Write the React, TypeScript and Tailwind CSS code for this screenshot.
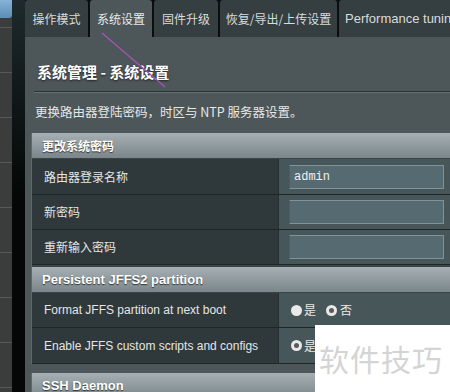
const tabs = [
  { label: '操作模式', w: 'w-[63px]' },
  { label: '系统设置', w: 'w-[62px]', active: true },
  { label: '固件升级', w: 'w-[64px]' },
  { label: '恢复/导出/上传设置', w: 'w-[117px]' },
  { label: 'Performance tuning', w: 'w-[120px]', latin: true },
];

const Header = ({ children, latin }: { children: React.ReactNode; latin?: boolean }) => (
  <div
    className={`h-[26px] flex items-center pl-[10px] bg-gradient-to-b from-[#a6b0b4] to-[#7b868a] border-b border-[#3a4447] text-white font-bold text-[12px] [text-shadow:0_1px_1px_#333] ${
      latin ? "font-['Liberation_Sans',sans-serif] text-[13px]" : "font-['Noto_Sans_CJK_SC',sans-serif]"
    }`}
  >
    {children}
  </div>
);

const Row = ({ label, children, latin, h = 'h-[35px]' }: { label: string; children?: React.ReactNode; latin?: boolean; h?: string }) => (
  <div className={`flex ${h} border-b border-[#1e2628]`}>
    <div
      className={`w-[246px] shrink-0 bg-[#2f383b] flex items-center pl-[12px] text-[12px] text-[#e4e6e6] ${
        latin ? "font-['Liberation_Sans',sans-serif]" : "font-['Noto_Sans_CJK_SC',sans-serif]"
      }`}
    >
      {label}
    </div>
    <div className="flex-1 bg-[#475659] flex items-center pl-[10px] border-l border-[#263033]">{children}</div>
  </div>
);

const Input = ({ value }: { value?: string }) => (
  <div className="w-[155px] h-[24px] bg-[#566b71] border border-[#7f9398] border-l-[#4a5d62] flex items-center pl-[4px] font-['Liberation_Mono',monospace] text-[12px] text-[#eef0f0]">
    {value}
  </div>
);

const Radio = ({ checked }: { checked?: boolean }) => (
  <span className="w-[11px] h-[11px] rounded-full bg-[#e9e9e9] flex items-center justify-center shrink-0">
    {checked && <span className="w-[5px] h-[5px] rounded-full bg-[#5a5a5a]" />}
  </span>
);

const Choice = ({ yes }: { yes?: boolean }) => (
  <div className="flex items-center ml-[2px] font-['Noto_Sans_CJK_SC',sans-serif] text-[12px] text-[#e8eaea]">
    <Radio checked={yes} />
    <span className="ml-[2px] mr-[10px]">是</span>
    <Radio checked={!yes} />
    <span className="ml-[3px]">否</span>
  </div>
);

const App = () => {
  return (
    <div className="relative w-[450px] h-[392px] overflow-hidden flex bg-[#070909] font-['Noto_Sans_CJK_SC',sans-serif]">
      {/* side menu */}
      <div className="w-[12px] shrink-0 flex flex-col bg-[#3b3c3c]">
        <div className="h-[18px] bg-gradient-to-b from-[#86b3d6] to-[#5d8db5] rounded-br-[3px]" />
        <div className="h-[10px] border-b border-[#575859]" />
        {Array.from({ length: 8 }).map((_, i) => (
          <div key={i} className="h-[45px] shrink-0 border-b border-[#575859]" />
        ))}
      </div>
      <div className="w-[13px] shrink-0 bg-gradient-to-b from-[#1e2a2d] via-[#050707] to-[#050707]" />

      {/* main */}
      <div className="flex-1 flex flex-col min-w-0">
        <div className="h-[37px] flex gap-[2px] bg-[#0b0e0f] shrink-0">
          {tabs.map((t) => (
            <div
              key={t.label}
              className={`${t.w} shrink-0 flex items-center justify-center rounded-t-[3px] text-[12px] whitespace-nowrap overflow-hidden ${
                t.active ? 'bg-[#4d5659] text-[#e8eaea]' : 'bg-[#353e41] text-[#d9dcdc]'
              } ${t.latin ? "font-['Liberation_Sans',sans-serif] justify-start pl-[6px] text-[13px]" : ''}`}
            >
              {t.label}
            </div>
          ))}
        </div>

        <div className="flex-1 bg-[#4d5659] flex flex-col">
          <div className="ml-[12px] mt-[25px] h-[20px] flex items-center text-[15px] font-bold text-white [text-shadow:0_1px_2px_#222]">
            系统管理 - 系统设置
          </div>
          <div className="ml-[9px] mt-[9px] h-px bg-[#2a3133] border-b border-[#66706f] box-content" />
          <div className="ml-[10px] mt-[11px] h-[16px] flex items-center text-[12.5px] text-[#e6e8e8]">
            更换路由器登陆密码，时区与 NTP 服务器设置。
          </div>

          <div className="ml-[6px] mt-[13px] flex flex-col border-l border-[#5e696c]">
            <Header>更改系统密码</Header>
            <Row label="路由器登录名称" h="h-[36px]">
              <Input value="admin" />
            </Row>
            <Row label="新密码">
              <Input />
            </Row>
            <Row label="重新输入密码">
              <Input />
            </Row>
            <div className="h-[2px] bg-[#3b4548]" />
            <Header latin>Persistent JFFS2 partition</Header>
            <Row label="Format JFFS partition at next boot" latin>
              <Choice />
            </Row>
            <Row label="Enable JFFS custom scripts and configs" latin h="h-[36px]">
              <Choice yes />
            </Row>
            <div className="h-[9px] bg-[#4d5659] -ml-px" />
            <Header latin>SSH Daemon</Header>
          </div>
        </div>
      </div>

      {/* annotation line */}
      <svg className="absolute left-0 top-0 pointer-events-none" width="450" height="392">
        <line x1="102" y1="33" x2="165" y2="87" stroke="#a055b0" strokeWidth="1.5" />
      </svg>

      {/* watermark */}
      <div className="absolute left-[315px] top-[325px] w-[135px] h-[67px] bg-white flex items-center pl-[4px] text-[30px] text-[#d4d4d4] tracking-[1px]">
        软件技巧
      </div>
    </div>
  );
};

export default App;
